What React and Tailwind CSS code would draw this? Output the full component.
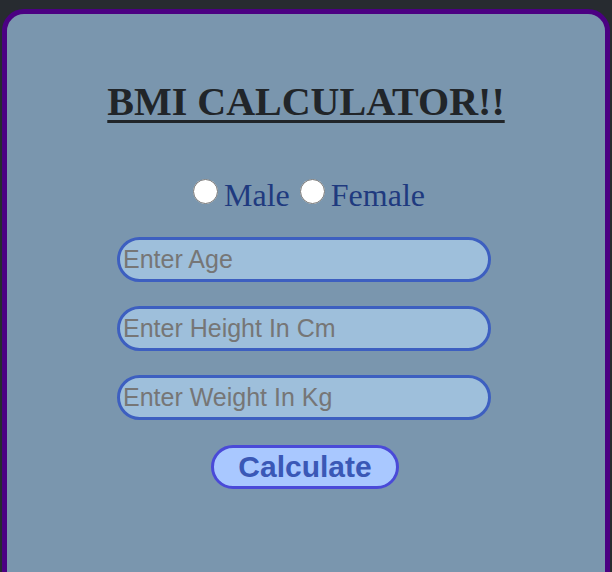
export default function App() {
  return (
    <div className="h-[572px] w-[612px] overflow-hidden bg-[#272b30] pt-[9px] pl-[2px] pr-[2px]">
      <div className="h-[600px] rounded-[22px] border-[5px] border-[#4b0082] bg-[#7a96ae] flex flex-col items-center pt-[64px]">
        <h1 className="font-['Liberation_Serif',serif] text-[40px] font-bold leading-[48px] text-[#212529] underline decoration-[3px] underline-offset-[5px]">
          BMI CALCULATOR!!
        </h1>

        <div className="mt-[51px] ml-[6px] flex items-center font-['Liberation_Serif',serif] text-[32px] leading-[36px] text-[#1f3a7f]">
          <input type="radio" name="g" className="w-[25px] h-[25px] m-0 mr-[6px] -mt-[7px]" />
          <span>Male</span>
          <input type="radio" name="g" className="w-[25px] h-[25px] m-0 ml-[10px] mr-[6px] -mt-[7px]" />
          <span>Female</span>
        </div>

        <div className="mt-[24px] mr-[4px] flex flex-col gap-[24px]">
          {["Enter Age", "Enter Height In Cm", "Enter Weight In Kg"].map((p) => (
            <input
              key={p}
              placeholder={p}
              className="w-[374px] h-[45px] rounded-full border-[3px] border-[#3d5fc0] bg-[#9ebfdb] px-[3px] font-['Liberation_Sans',sans-serif] text-[25px] text-[#222] placeholder:text-[#767676] outline-none"
            />
          ))}
        </div>

        <button className="mt-[25px] mr-[2px] w-[188px] h-[44px] rounded-full border-[3px] border-[#4a4ad8] bg-[#a9c8ff] font-['Liberation_Sans',sans-serif] text-[30px] font-bold text-[#3a58b6] leading-none">
          Calculate
        </button>
      </div>
    </div>
  );
}
